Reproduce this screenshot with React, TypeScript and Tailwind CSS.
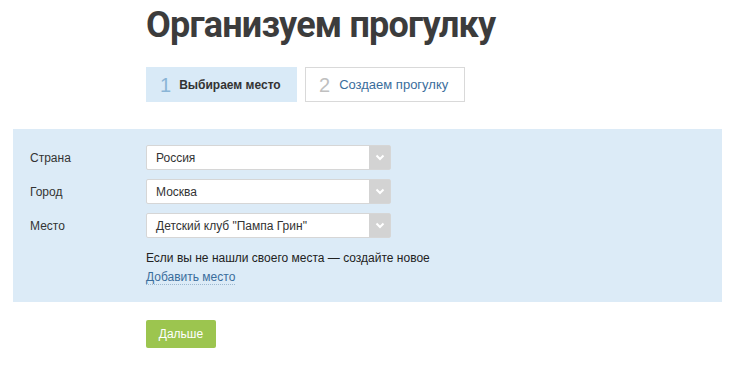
import React from "react";

const rows = [
  { label: "Страна", value: "Россия" },
  { label: "Город", value: "Москва" },
  { label: "Место", value: 'Детский клуб "Пампа Грин"' },
];

function Chevron() {
  return (
    <svg width="10" height="7" viewBox="0 0 10 7" fill="none">
      <path d="M1.5 1.5 L5 5 L8.5 1.5" stroke="#ffffff" strokeWidth="2" />
    </svg>
  );
}

function SelectBox({ value }: { value: string }) {
  return (
    <div className="flex h-[25px] w-[245px] items-stretch rounded-[2px] border border-[#d6d6d6] bg-white">
      <div className="flex flex-1 items-center pl-[9px] text-[12px] text-[#333]">
        {value}
      </div>
      <div className="flex w-[21px] items-center justify-center bg-[#d3d3d3]">
        <Chevron />
      </div>
    </div>
  );
}

export default function App() {
  return (
    <div
      className="min-h-[366px] bg-white px-[13px]"
      style={{ fontFamily: '"Liberation Sans", Arial, sans-serif' }}
    >
      <div className="pl-[133px]">
        <h1 className="pt-[3px] font-['Roboto',sans-serif] text-[36px] font-bold leading-[44px] tracking-[-0.8px] text-[#3c3c3c]">
          Организуем прогулку
        </h1>
        <div className="mt-[20px] flex gap-[8px]">
          <div className="flex h-[35px] w-[151px] items-center bg-[#d9eaf7] pl-[14px]">
            <span className="mr-[8px] text-[20px] text-[#8ab5d6]">1</span>
            <span className="text-[12px] font-bold text-[#333]">Выбираем место</span>
          </div>
          <div className="flex h-[35px] w-[160px] items-center border border-[#d9d9d9] bg-white pl-[13px]">
            <span className="mr-[9px] text-[20px] text-[#c0c0c0]">2</span>
            <span className="text-[13px] text-[#3a6d9c]">Создаем прогулку</span>
          </div>
        </div>
      </div>

      <div className="mt-[27px] h-[173px] bg-[#dcebf7] pl-[17px] pt-[16px]">
        <div className="flex flex-col gap-[9px]">
          {rows.map((r) => (
            <div key={r.label} className="flex items-center">
              <div className="w-[116px] text-[12px] text-[#333]">{r.label}</div>
              <SelectBox value={r.value} />
            </div>
          ))}
        </div>
        <div className="ml-[116px] mt-[11px] text-[12px] leading-[18px] text-[#222]">
          Если вы не нашли своего места — создайте новое
        </div>
        <div className="ml-[116px] mt-[2px] leading-[14px]">
          <a className="border-b border-dotted border-[#9db8d0] text-[12px] leading-[14px] text-[#3a6d9c]">
            Добавить место
          </a>
        </div>
      </div>

      <div className="mt-[18px] pl-[133px]">
        <button className="h-[28px] w-[70px] rounded-[2px] bg-[#9cc54f] text-[12px] text-white">
          Дальше
        </button>
      </div>
    </div>
  );
}
